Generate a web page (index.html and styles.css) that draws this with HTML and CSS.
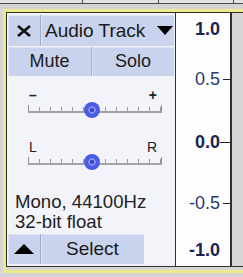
FILE: index.html
```html
<!DOCTYPE html>
<html>
<head>
<meta charset="utf-8">
<link rel="stylesheet" href="styles.css">
</head>
<body>
<div class="prev"><span class="seg s1"></span><span class="seg s2"></span><span class="seg s3"></span><span class="seg s4"></span></div>
<div class="track">
  <div class="inner">
    <div class="label">
      <div class="row title-row">
        <div class="btn close">
          <svg width="16" height="12" viewBox="0 0 16 12"><path d="M2 1 L14 11 M14 1 L2 11" stroke="#111" stroke-width="2.6" fill="none"/></svg>
        </div>
        <div class="btn name"><span class="name-text">Audio Track</span>
          <svg class="tri" width="16" height="9" viewBox="0 0 16 9"><path d="M0 0 H16 L8 9 Z" fill="#000"/></svg>
        </div>
      </div>
      <div class="row ms-row">
        <div class="btn mute">Mute</div>
        <div class="btn solo">Solo</div>
      </div>
      <div class="slider gain">
        <div class="slabels"><span class="minus">–</span><span class="plus">+</span></div>
        <div class="strack"><span class="thumb"></span></div>
      </div>
      <div class="slider pan">
        <div class="slabels"><span>L</span><span>R</span></div>
        <div class="strack"><span class="thumb"></span></div>
      </div>
      <div class="info">Mono, 44100Hz<br>32-bit float</div>
      <div class="row bottom-row">
        <div class="btn collapse">
          <svg width="20" height="10" viewBox="0 0 20 10"><path d="M10 0 L20 10 H0 Z" fill="#000"/></svg>
        </div>
        <div class="btn select">Select</div>
      </div>
    </div>
    <div class="ruler">
      <div class="tick t1 major"><span>1.0</span></div>
      <div class="tick t2"><span>0.5</span><i class="mark"></i></div>
      <div class="tick t3 major"><span>0.0</span><i class="mark long"></i></div>
      <div class="tick t4"><span>-0.5</span><i class="mark"></i></div>
      <div class="tick t5 major"><span>-1.0</span></div>
    </div>
    <div class="wave"></div>
  </div>
</div>
</body>
</html>
```
FILE: styles.css
```css
html, body {
  margin: 0;
  padding: 0;
}
body {
  width: 243px;
  height: 277px;
  overflow: hidden;
  background: #d5d5d5;
  font-family: "Liberation Sans", Arial, sans-serif;
  color: #1a1a1a;
}
.prev {
  display: flex;
  height: 3px;
  background: #e3e3e3;
  border-bottom: 1px solid #4a4a4a;
}
.seg {
  display: block;
  height: 100%;
}
.s1 { width: 82px; border-right: 1px solid #4a4a4a; }
.s2 { width: 75px; border-right: 1px solid #4a4a4a; }
.s3 { width: 74px; border-right: 1px solid #4a4a4a; }
.s4 { flex: 1; }

.track {
  margin-top: 5px;
  margin-left: 3px;
  border-top: 3px solid #eeea8c;
  border-left: 3px solid #eeea8c;
  border-bottom: 3px solid #eeea8c;
}
.inner {
  display: flex;
  border-top: 1px solid #303030;
  border-left: 1px solid #303030;
  border-bottom: 1px solid #303030;
  margin-bottom: 3px;
  height: 253px;
}
.label {
  width: 166px;
  padding: 2px 1px;
  background: #f2f4fa;
  display: flex;
  flex-direction: column;
}
.row {
  display: flex;
  gap: 1px;
  background: #a4acc0;
}
.btn {
  background: #c9d3ed;
  display: flex;
  align-items: center;
  justify-content: center;
  font-size: 18px;
  box-shadow: inset 1px 1px 0 #dde3f4;
}
.title-row { height: 31px; }
.close { width: 32px; }
.name {
  flex: 1;
  justify-content: space-between;
  padding: 0 1px 0 4px;
}
.name-text { font-size: 19px; }
.ms-row {
  height: 29px;
  margin-top: 1px;
}
.mute { width: 83px; }
.solo { flex: 1; }

.slider {
  padding-left: 20px;
}
.gain { margin-top: 12px; }
.pan { margin-top: 27px; }
.slabels {
  width: 128px;
  height: 14px;
  display: flex;
  justify-content: space-between;
  font-size: 14px;
  line-height: 14px;
  color: #222;
  padding-left: 1px;
}
.plus { font-weight: bold; }
.minus { font-weight: bold; }
.strack {
  position: relative;
  width: 134px;
  height: 11px;
  background:
    linear-gradient(#a2a2a2, #a2a2a2) left bottom / 100% 2px no-repeat,
    linear-gradient(#8e8e8e, #8e8e8e) left bottom / 1px 8px no-repeat,
    linear-gradient(#8e8e8e, #8e8e8e) right bottom / 1px 8px no-repeat,
    repeating-linear-gradient(to right, #9a9a9a 0 1px, transparent 1px 11px) left bottom 2px / 100% 4px no-repeat;
}
.thumb {
  position: absolute;
  left: 56px;
  top: 0;
  width: 16px;
  height: 16px;
  border-radius: 50%;
  background: radial-gradient(circle, #3c4cc8 0 2px, #8591f0 2.5px 3.5px, #4a5ce6 4px);
}

.info {
  margin-top: 27px;
  padding-left: 7px;
  font-size: 18.6px;
  line-height: 20px;
  color: #222;
}
.bottom-row {
  margin-top: 2px;
  height: 30px;
  width: 136px;
}
.collapse { width: 32px; }
.select { flex: 1; font-size: 19px; }

.ruler {
  width: 54px;
  border-left: 1px solid #303030;
  border-right: 2px solid #303030;
  background: #fdfdfd;
  display: flex;
  flex-direction: column;
  padding-top: 7px;
}
.tick {
  height: 18px;
  line-height: 18px;
  font-size: 18px;
  display: flex;
  justify-content: flex-end;
  align-items: center;
  padding-right: 10px;
  color: #2c3a70;
}
.tick.major {
  font-weight: bold;
  color: #1c2550;
}
.tick .mark {
  display: block;
  width: 7px;
  height: 1px;
  background: #222;
  margin-left: 3px;
  margin-right: -10px;
}
.tick .mark.long {
  width: 10px;
  margin-left: 0;
}
.t2 { margin-top: 32px; }
.t3 { margin-top: 45px; }
.t4 { margin-top: 43px; }
.t5 { margin-top: 29px; }
.wave {
  flex: 1;
  background: #d5d5d5;
}
```
